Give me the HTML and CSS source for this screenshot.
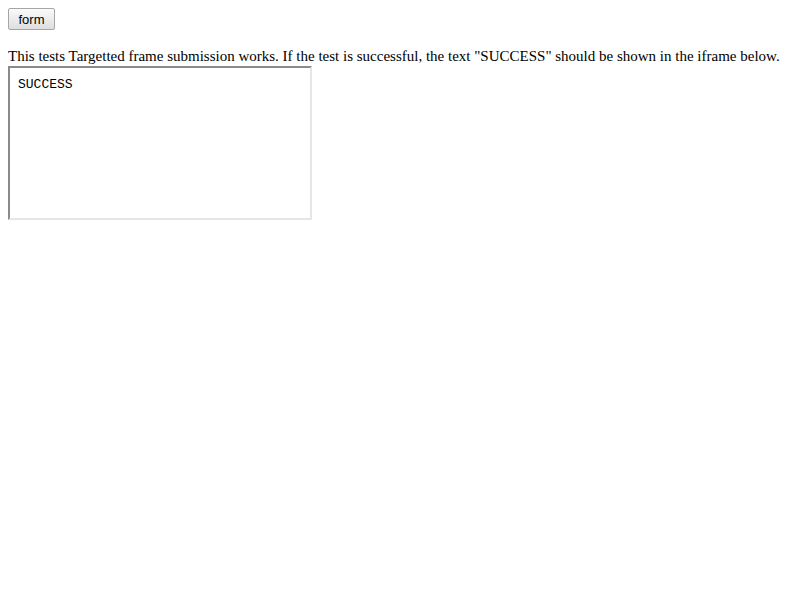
FILE: index.html
```html
<!DOCTYPE html>
<html>
<head>
<meta charset="utf-8">
<link rel="stylesheet" href="styles.css">
</head>
<body>
<form class="frm"><button type="button" class="btn">form</button></form>
<div class="intro">This tests Targetted frame submission works. If the test is successful, the text "SUCCESS" should be shown in the iframe below.</div>
<div class="frame"><pre class="result">SUCCESS</pre></div>
</body>
</html>
```
FILE: styles.css
```css
html, body { background: #fff; }
body {
  margin: 8px;
  font-family: "Liberation Serif", serif;
  font-size: 16px;
  color: #000;
}
.frm { margin: 0 0 16px 0; height: 22px; }
.btn {
  display: block;
  margin: 0;
  width: 47px;
  height: 22px;
  padding: 0;
  font-family: "Liberation Sans", Arial, sans-serif;
  font-size: 13px;
  color: #000;
  background: linear-gradient(#fafafa, #dedede);
  border: 1px solid #a6a6a6;
  border-radius: 2px;
}
.intro {
  font-size: 15px;
  line-height: 20px;
  height: 20px;
  white-space: nowrap;
}
.frame {
  width: 300px;
  height: 150px;
  border: 2px solid;
  border-color: #8a8a8a #e6e6e6 #e6e6e6 #8a8a8a;
  box-sizing: content-box;
  background: #fff;
}
.result {
  margin: 8px;
  padding-top: 1px;
  font-family: "Liberation Mono", "Courier New", monospace;
  font-size: 13px;
  line-height: 15px;
}
```
